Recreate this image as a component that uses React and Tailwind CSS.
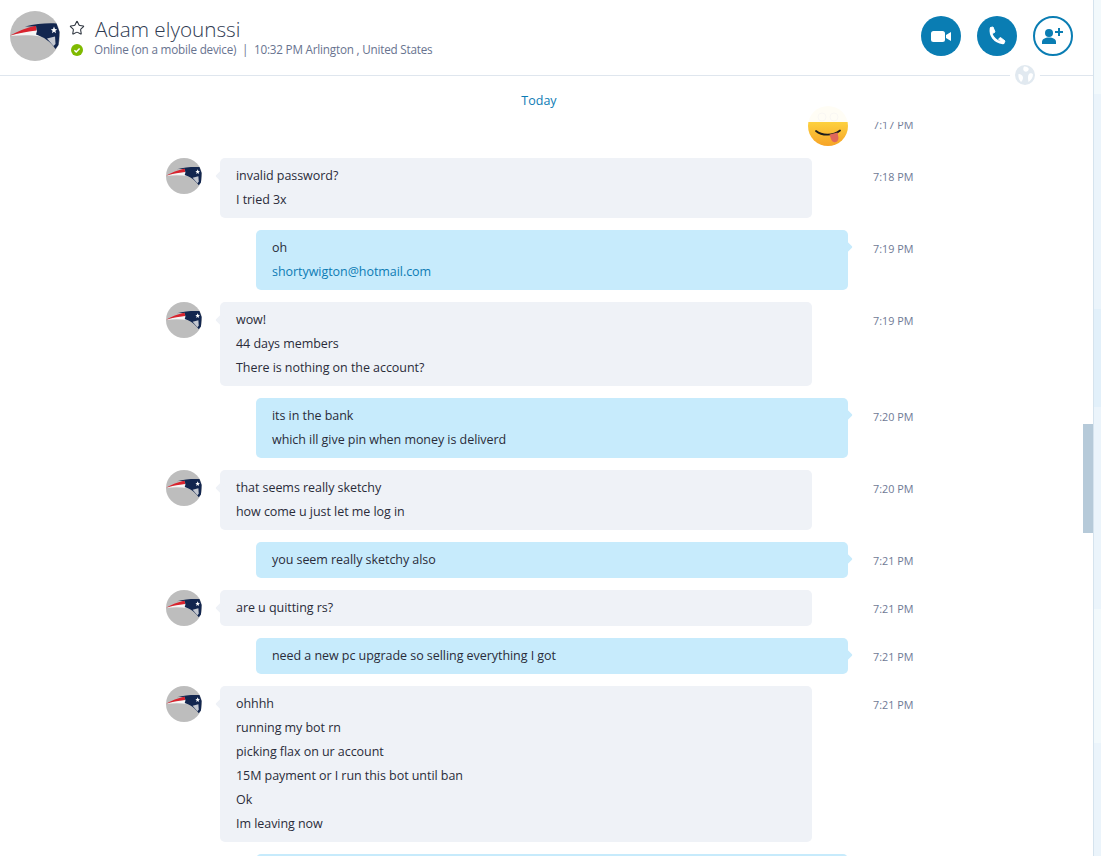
import React from 'react';
import { Star } from 'lucide-react';

const FONT = "font-['Open_Sans','Noto_Sans',sans-serif]";

const rows = [
  { id: 1, from: 'them', time: '7:18 PM', lines: ['invalid password?', 'I tried 3x'] },
  { id: 2, from: 'me', time: '7:19 PM', lines: ['oh', { link: 'shortywigton@hotmail.com' }] },
  { id: 3, from: 'them', time: '7:19 PM', lines: ['wow!', '44 days members', 'There is nothing on the account?'] },
  { id: 4, from: 'me', time: '7:20 PM', lines: ['its in the bank', 'which ill give pin when money is deliverd'] },
  { id: 5, from: 'them', time: '7:20 PM', lines: ['that seems really sketchy', 'how come u just let me log in'] },
  { id: 6, from: 'me', time: '7:21 PM', lines: ['you seem really sketchy also'] },
  { id: 7, from: 'them', time: '7:21 PM', lines: ['are u quitting rs?'] },
  { id: 8, from: 'me', time: '7:21 PM', lines: ['need a new pc upgrade so selling everything I got'] },
  { id: 9, from: 'them', time: '7:21 PM', lines: ['ohhhh', 'running my bot rn', 'picking flax on ur account', '15M payment or I run this bot until ban', 'Ok', 'Im leaving now'] },
  // only the top edge of this bubble shows at the bottom of the window
  { id: 10, from: 'me', time: '', lines: [''] },
];

function Avatar({ size }) {
  return (
    <svg width={size} height={size} viewBox="0 0 50 50" className="shrink-0">
      <circle cx="25" cy="25" r="25" fill="#bdbdbd" />
      <path d="M0 25 C8 22 16 20 27 19 L31 25.5 C20 23.5 10 24 0 25Z" fill="#f6f6f6" />
      <path d="M0 24.5 C8 20 16 17 26 14.5 L26.5 19.5 C16 20.5 8 22.5 0 24.5Z" fill="#d9232e" />
      <path d="M15 15.5 C26 12.5 38 12 46.5 12.5 L49.5 21 L48.5 34 L45.5 38 C41 31 33 25.5 26 23.5 L27 20 L26 15 C22 15.4 18 15.5 15 15.5Z" fill="#12264f" />
      <path d="M37 27.5 L45 25.5 L45.5 33 L43.5 35Z" fill="#c4c8d0" />
      <path d="M44 15.5 L45 18 L47.2 18.4 L45.4 19.8 L46 22.2 L44 20.8 L42 22.2 L42.6 19.8 L40.8 18.4 L43 18Z" fill="#ffffff" />
    </svg>
  );
}

function Bubble({ row }) {
  const mine = row.from === 'me';
  return (
    <div className={`relative w-[592px] rounded-[5px] px-4 py-[6px] text-[12.5px] leading-6 tracking-[-0.05px] text-[#2a2c3a] ${mine ? 'bg-[#c7ebfc]' : 'bg-[#eff2f7]'}`}>
      <div className={`absolute size-[8px] rotate-45 rounded-[1px] ${mine ? 'right-[-3px] top-[13px] bg-[#c7ebfc]' : 'left-[-3px] top-[14px] bg-[#eff2f7]'}`} />
      {row.lines.map((l, i) =>
        typeof l === 'string' ? (
          <div key={i} className="relative h-6">{l}</div>
        ) : (
          <div key={i} className="relative h-6 text-[#0d7cb5]">{l.link}</div>
        )
      )}
    </div>
  );
}

function Time({ children }) {
  return <div className="ml-[25px] mt-[11px] w-[50px] text-[10.8px] leading-4 whitespace-nowrap text-[#6f7a96]">{children}</div>;
}

function Row({ row }) {
  const mine = row.from === 'me';
  return (
    <div className="flex items-start">
      <div className="flex w-[682px] items-start">
        {mine ? (
          <div className="w-[90px]" />
        ) : (
          <div className="w-[54px]"><Avatar size={36} /></div>
        )}
        <Bubble row={row} />
      </div>
      <Time>{row.time}</Time>
    </div>
  );
}

function Emoji() {
  return (
    <svg width="40" height="40" viewBox="0 0 40 40">
      <defs>
        <linearGradient id="emojiFace" x1="0" y1="0" x2="0" y2="1">
          <stop offset="0.4" stopColor="#fdd13f" />
          <stop offset="1" stopColor="#f6a326" />
        </linearGradient>
      </defs>
      <circle cx="20" cy="20" r="20" fill="url(#emojiFace)" />
      <circle cx="14" cy="11" r="4" fill="none" stroke="#8a6a20" strokeWidth="1" />
      <circle cx="26" cy="11" r="4" fill="none" stroke="#8a6a20" strokeWidth="1" />
      <path d="M8 25 C14 30 25 30 32 24.5" fill="none" stroke="#1c1c1c" strokeWidth="1.8" strokeLinecap="round" />
      <path d="M21.5 28.5 L29.5 26.5 L30.5 32 C30.5 37 24.5 38 23 33Z" fill="#e0685a" />
    </svg>
  );
}

function Globe() {
  return (
    <svg width="20" height="20" viewBox="0 0 20 20">
      <circle cx="10" cy="10" r="10" fill="#e1e9f0" />
      <path d="M9 1.5 C12 1.5 14.5 3 13.5 5 C12.5 7 10.5 7 9 6 C8 5 8 3 9 1.5Z M3.5 9 C5.5 9 8 10.5 8 12.5 C8 14.5 7 16.5 6 17 C4 15 3 12 3.5 9Z M14.5 8.5 C16 8 17.5 8.5 18 9.5 C18 12.5 16 15.5 13.5 17 C13 14 12.5 10 14.5 8.5Z" fill="#ffffff" />
    </svg>
  );
}

export default function App() {
  return (
    <div className={`flex h-[856px] w-[1101px] overflow-hidden bg-white ${FONT}`}>
      <div className="flex min-w-0 flex-1 flex-col">
        <header className="relative z-20 flex h-[76px] shrink-0 items-center border-b border-[#dfe6ee] pb-[3px] pl-[10px] pr-[20px]">
          <Avatar size={50} />
          <div className="ml-[10px] min-w-0">
            <div className="flex h-[28px] items-center">
              <Star size={16} strokeWidth={1.6} className="mb-[2px] ml-[-1px] w-[16px] text-[#2f3640]" />
              <span className="mb-[1px] ml-[10px] text-[20.7px] leading-7 font-light text-[#2f3b52]">Adam elyounssi</span>
            </div>
            <div className="mt-[-2px] flex items-center text-[11.7px] leading-4 text-[#68738f]">
              <svg width="12" height="12" viewBox="0 0 12 12" className="mr-[12px] ml-[1px] mt-[1px]">
                <circle cx="6" cy="6" r="6" fill="#7fba00" />
                <path d="M3.4 6.2 L5.2 8 L8.6 4.4" fill="none" stroke="#fff" strokeWidth="1.5" />
              </svg>
              <span className="ml-[-1px] tracking-[-0.2px]">Online (on a mobile device)&nbsp; |&nbsp; 10:32 PM Arlington , United States</span>
            </div>
          </div>
          <div className="ml-auto flex gap-4">
            <button className="flex size-10 items-center justify-center rounded-full bg-[#0a7db3]">
              <svg width="20" height="11" viewBox="0 0 20 11" fill="#fff">
                <rect x="0" y="0" width="14" height="11" rx="2.5" />
                <path d="M15 4 L20 1 V10 L15 7Z" />
              </svg>
            </button>
            <button className="flex size-10 items-center justify-center rounded-full bg-[#0a7db3]">
              <svg width="18" height="20" viewBox="0 0 18 20" fill="none">
                <path d="M3 2.5 C2 9 6 15.5 15 17" stroke="#fff" strokeWidth="2.6" strokeLinecap="round" />
                <path d="M2.5 1.5 L5 1 L7 6 L4.5 7.5Z M10.5 13 L12.5 11.5 L17 15 L15.5 18Z" fill="#fff" stroke="#fff" strokeLinejoin="round" />
              </svg>
            </button>
            <button className="flex size-10 items-center justify-center rounded-full border-2 border-[#0a7db3]">
              <svg width="22" height="18" viewBox="0 0 22 18" fill="#0a7db3">
                <circle cx="7" cy="6" r="4" />
                <path d="M0 17 V15 C0 12 3 10.5 7 10.5 C11 10.5 14 12 14 15 V17Z" />
                <path d="M16 1 H18 V4 H21 V6 H18 V9 H16 V6 H13 V4 H16Z" />
              </svg>
            </button>
          </div>
          <div className="absolute bottom-[-15px] left-[1010px] flex size-[30px] items-center justify-center rounded-full bg-white p-[5px]">
            <Globe />
          </div>
        </header>
        <main className="relative min-h-0 flex-1 overflow-hidden pl-[166px] pt-[30px]">
          <div className="absolute inset-x-0 top-0 z-10 h-[46px] bg-white/95 pr-[15px] pt-[17px] text-center text-[12.5px] leading-4 text-[#0d7cb5]">
            Today
          </div>
          <div className="flex flex-col gap-3">
            <div className="flex items-start">
              <div className="flex w-[682px] justify-end"><Emoji /></div>
              <Time>7:17 PM</Time>
            </div>
            {rows.map((r) => <Row key={r.id} row={r} />)}
          </div>
          <div className="absolute right-0 top-[348px] h-[109px] w-[10px] bg-[#b6cad9]" />
        </main>
      </div>
      <div className="flex w-2 shrink-0 flex-col border-l border-[#d5e3ee]">
        <div className="h-[94px] bg-[#f2f9fc]" />
        <div className="h-[215px] bg-[#ebf4fb]" />
        <div className="h-[98px] bg-[#e2f0fa]" />
        <div className="h-[202px] bg-[#ebf4fb]" />
        <div className="h-[134px] bg-[#f2f9fc]" />
        <div className="flex-1 bg-[#ebf4fb]" />
      </div>
    </div>
  );
}
